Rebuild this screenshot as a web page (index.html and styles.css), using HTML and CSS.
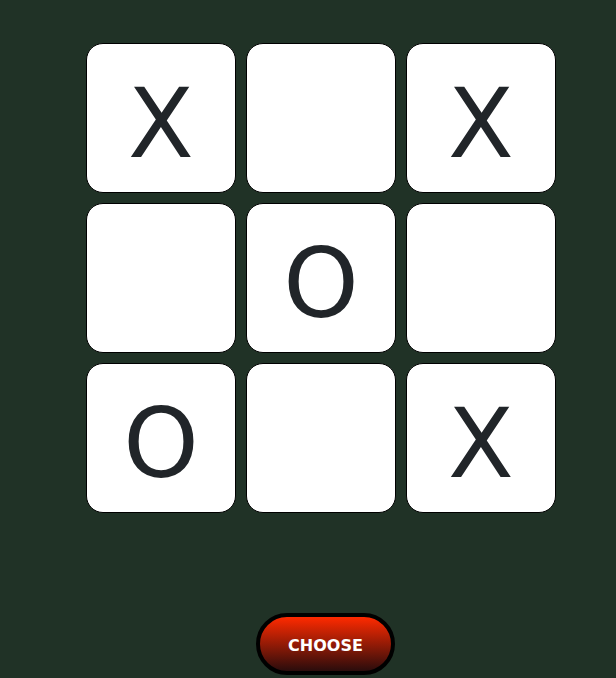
FILE: index.html
```html
<!DOCTYPE html>
<html>
<head>
<meta charset="utf-8">
<link rel="stylesheet" href="styles.css">
</head>
<body>
<div class="page">
  <div class="board">
    <div class="cell">X</div>
    <div class="cell"></div>
    <div class="cell">X</div>
    <div class="cell"></div>
    <div class="cell">O</div>
    <div class="cell"></div>
    <div class="cell">O</div>
    <div class="cell"></div>
    <div class="cell">X</div>
  </div>
  <div class="actions">
    <button class="choose">CHOOSE</button>
  </div>
</div>
</body>
</html>
```
FILE: styles.css
```css
html, body {
  margin: 0;
  padding: 0;
  background: #203226;
  height: 100%;
  overflow: hidden;
}
.page {
  padding-top: 43px;
  padding-left: 86px;
}
.board {
  display: grid;
  grid-template-columns: repeat(3, 150px);
  grid-auto-rows: 150px;
  gap: 10px;
}
.cell {
  box-sizing: border-box;
  background: #fff;
  border: 1px solid #000;
  border-radius: 17px;
  display: flex;
  align-items: center;
  justify-content: center;
  font-family: "DejaVu Sans", sans-serif;
  font-size: 96px;
  line-height: 1;
  color: #212529;
  padding-top: 12px;
}
.actions {
  margin-top: 100px;
  padding-left: 170px;
}
.choose {
  box-sizing: border-box;
  width: 139px;
  height: 62px;
  border: 4px solid #000;
  border-radius: 31px;
  background: linear-gradient(to bottom, #ff2a00, #2a0c0c);
  color: #fff;
  font-family: "DejaVu Sans", sans-serif;
  font-weight: bold;
  font-size: 16px;
  padding: 2px 0 0;
}
```
